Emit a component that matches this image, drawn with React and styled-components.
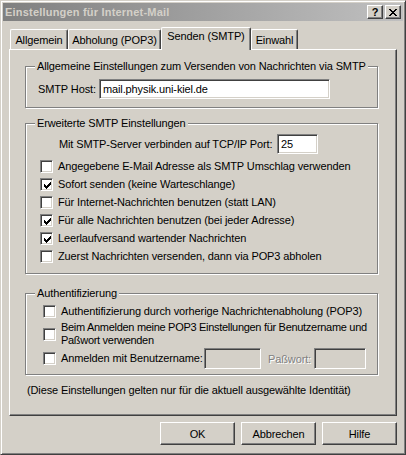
import React from 'react'
import styled, { createGlobalStyle } from 'styled-components'

const GlobalStyle = createGlobalStyle`
  body {
    margin: 0;
    background: #d4d0c8;
    font-family: "Liberation Sans", Arial, sans-serif;
    font-size: 11px;
    letter-spacing: -0.12px;
    color: #000;
  }
`;

const Window = styled.div`
  box-sizing: border-box;
  width: 406px;
  height: 455px;
  padding: 2px;
  background: #d4d0c8;
  border: 1px solid;
  border-color: #d4d0c8 #404040 #404040 #d4d0c8;
  box-shadow: inset 1px 1px #fff, inset -1px -1px #808080;
  display: flex;
  flex-direction: column;
`;

const TitleBar = styled.div`
  height: 18px;
  display: flex;
  align-items: center;
  justify-content: space-between;
  padding-left: 2px;
  background: linear-gradient(to right, #808080, #c0c0c0);
`;

const Title = styled.span`
  font-weight: bold;
  font-size: 11px;
  color: #d4d0c8;
  letter-spacing: 0.2px;
`;

const CaptionButtons = styled.div`
  display: flex;
  gap: 2px;
  margin-right: 2px;
`;

const CaptionButton = styled.div`
  box-sizing: border-box;
  width: 16px;
  height: 14px;
  background: #d4d0c8;
  border: 1px solid;
  border-color: #fff #404040 #404040 #fff;
  box-shadow: inset -1px -1px #808080;
  display: flex;
  align-items: center;
  justify-content: center;
  font-weight: bold;
  font-size: 11px;
  line-height: 1;
`;

const Body = styled.div`
  flex: 1;
  display: flex;
  flex-direction: column;
  padding: 6px 6px 0 6px;
`;

const TabStrip = styled.div`
  display: flex;
  align-items: flex-end;
  height: 22px;
  padding-left: 1px;
`;

const Tab = styled.div`
  box-sizing: border-box;
  position: relative;
  width: ${p => p.$w}px;
  height: ${p => (p.$active ? 23 : 20)}px;
  margin-bottom: ${p => (p.$active ? -1 : 0)}px;
  z-index: ${p => (p.$active ? 2 : 1)};
  background: #d4d0c8;
  border-top: 1px solid #fff;
  border-left: 1px solid #fff;
  border-right: 1px solid #404040;
  border-radius: 2px 2px 0 0;
  box-shadow: inset -1px 0 #808080;
  display: flex;
  justify-content: center;
  padding-top: ${p => (p.$active ? 2 : 4)}px;
  white-space: nowrap;
`;

const Panel = styled.div`
  box-sizing: border-box;
  width: 388px;
  height: 367px;
  padding: 16px 0 0 15px;
  background: #d4d0c8;
  border: 1px solid;
  border-color: #fff #404040 #404040 #fff;
  box-shadow: inset -1px -1px #808080;
  display: flex;
  flex-direction: column;
`;

const Group = styled.div`
  box-sizing: border-box;
  position: relative;
  width: 353px;
  margin-top: ${p => p.$mt || 0}px;
  padding: ${p => p.$pt}px 0 ${p => p.$pb}px ${p => p.$pl}px;
  border: 1px solid #808080;
  box-shadow: inset 1px 1px #fff, 1px 1px #fff;
  display: flex;
  flex-direction: column;
`;

const Legend = styled.span`
  position: absolute;
  top: -7px;
  left: 9px;
  padding: 0 2px;
  line-height: 13px;
  background: #d4d0c8;
  white-space: nowrap;
`;

const Row = styled.div`
  display: flex;
  align-items: center;
  margin-left: ${p => p.$ml || 0}px;
  margin-top: ${p => p.$mt || 0}px;
  min-height: ${p => p.$h ?? 18}px;
`;

const Label = styled.span`
  flex: none;
  width: ${p => (p.$w ? `${p.$w}px` : 'auto')};
  margin-left: ${p => p.$ml || 0}px;
  white-space: nowrap;
  color: ${p => (p.$disabled ? '#808080' : '#000')};
  text-shadow: ${p => (p.$disabled ? '1px 1px #fff' : 'none')};
`;

const TextBox = styled.div`
  box-sizing: border-box;
  flex: none;
  width: ${p => p.$w}px;
  height: ${p => p.$h || 20}px;
  padding: 2px 0 0 3px;
  background: ${p => (p.$disabled ? '#d4d0c8' : '#fff')};
  border: 1px solid;
  border-color: #808080 #fff #fff #808080;
  box-shadow: inset 1px 1px #404040, inset -1px -1px #d4d0c8;
  line-height: 14px;
  white-space: nowrap;
`;

const Box = styled.div`
  box-sizing: border-box;
  flex: none;
  width: 13px;
  height: 13px;
  padding: 2px;
  margin-right: 5px;
  background: #fff;
  border: 1px solid;
  border-color: #808080 #fff #fff #808080;
  box-shadow: inset 1px 1px #404040, inset -1px -1px #d4d0c8;
  svg { display: block; margin: 1px 0 0 1px; }
`;

const CheckText = styled.span`
  flex: none;
  line-height: 13px;
  width: ${p => (p.$w ? `${p.$w}px` : 'auto')};
  letter-spacing: ${p => (p.$tight ? '-0.3px' : 'inherit')};
  white-space: nowrap;
`;

const Footer = styled.div`
  margin: 9px 0 0 2px;
  line-height: 13px;
  white-space: nowrap;
`;

const ButtonRow = styled.div`
  display: flex;
  justify-content: flex-end;
  gap: 6px;
  width: 388px;
  margin-top: 6px;
`;

const Button = styled.div`
  box-sizing: border-box;
  width: 75px;
  height: 23px;
  background: #d4d0c8;
  border: 1px solid;
  border-color: #fff #404040 #404040 #fff;
  box-shadow: inset -1px -1px #808080;
  display: flex;
  align-items: center;
  justify-content: center;
`;

const CHECK = ['......x', '.....xx', 'x...xxx', 'xx.xxx.', 'xxxxx..', '.xxx...', '..x....'];

const CheckMark = () => (
  <svg width="7" height="7" viewBox="0 0 7 7" shapeRendering="crispEdges">
    {CHECK.flatMap((line, y) =>
      line.split('').map((c, x) => (c === 'x' ? <rect key={`${x}-${y}`} x={x} y={y} width="1" height="1" fill="#000" /> : null))
    )}
  </svg>
);

const CheckBox = ({ checked, children, mt }) => (
  <Row $mt={mt}>
    <Box>{checked && <CheckMark />}</Box>
    <CheckText>{children}</CheckText>
  </Row>
);

const smtpOptions = [
  { label: 'Angegebene E-Mail Adresse als SMTP Umschlag verwenden', checked: false },
  { label: 'Sofort senden (keine Warteschlange)', checked: true },
  { label: 'Für Internet-Nachrichten benutzen (statt LAN)', checked: false },
  { label: 'Für alle Nachrichten benutzen (bei jeder Adresse)', checked: true },
  { label: 'Leerlaufversand wartender Nachrichten', checked: true },
  { label: 'Zuerst Nachrichten versenden, dann via POP3 abholen', checked: false },
];

const tabs = [
  { label: 'Allgemein', w: 58 },
  { label: 'Abholung (POP3)', w: 93 },
  { label: 'Senden (SMTP)', w: 90, active: true },
  { label: 'Einwahl', w: 47 },
];

const App = () => {
  return (
    <>
      <GlobalStyle />
      <Window>
        <TitleBar>
          <Title>Einstellungen für Internet-Mail</Title>
          <CaptionButtons>
            <CaptionButton>?</CaptionButton>
            <CaptionButton>
              <svg width="8" height="7" viewBox="0 0 8 7" shapeRendering="crispEdges">
                <path d="M0 0h2v1h-2zM6 0h2v1h-2zM1 1h2v1h-2zM5 1h2v1h-2zM2 2h4v1h-4zM3 3h2v1h-2zM2 4h4v1h-4zM1 5h2v1h-2zM5 5h2v1h-2zM0 6h2v1h-2zM6 6h2v1h-2z" fill="#000" />
              </svg>
            </CaptionButton>
          </CaptionButtons>
        </TitleBar>
        <Body>
          <TabStrip>
            {tabs.map(t => (
              <Tab key={t.label} $w={t.w} $active={t.active}>{t.label}</Tab>
            ))}
          </TabStrip>
          <Panel>
            <Group $pt={12} $pb={8} $pl={12}>
              <Legend>Allgemeine Einstellungen zum Versenden von Nachrichten via SMTP</Legend>
              <Row $h={20}>
                <Label $w={61}>SMTP Host:</Label>
                <TextBox $w={231}>mail.physik.uni-kiel.de</TextBox>
              </Row>
            </Group>

            <Group $mt={15} $pt={10} $pb={8} $pl={14}>
              <Legend>Erweiterte SMTP Einstellungen</Legend>
              <Row $h={20} $ml={19}>
                <Label $w={218}>Mit SMTP-Server verbinden auf TCP/IP Port:</Label>
                <TextBox $w={41}>25</TextBox>
              </Row>
              {smtpOptions.map((o, i) => (
                <CheckBox key={o.label} checked={o.checked} mt={i === 0 ? 3 : 0}>{o.label}</CheckBox>
              ))}
            </Group>

            <Group $mt={19} $pt={8} $pb={5} $pl={17}>
              <Legend>Authentifizierung</Legend>
              <CheckBox>Authentifizierung durch vorherige Nachrichtenabholung (POP3)</CheckBox>
              <Row $mt={1} $h={26}>
                <Box />
                <CheckText $tight>Beim Anmelden meine POP3 Einstellungen für Benutzername und<br />Paßwort verwenden</CheckText>
              </Row>
              <Row $mt={1} $h={21}>
                <Box />
                <CheckText $w={143}>Anmelden mit Benutzername:</CheckText>
                <TextBox $w={57} $h={21} $disabled />
                <Label $disabled $ml={7} $w={46}>Paßwort:</Label>
                <TextBox $w={52} $h={21} $disabled />
              </Row>
            </Group>

            <Footer>(Diese Einstellungen gelten nur für die aktuell ausgewählte Identität)</Footer>
          </Panel>
          <ButtonRow>
            <Button>OK</Button>
            <Button>Abbrechen</Button>
            <Button>Hilfe</Button>
          </ButtonRow>
        </Body>
      </Window>
    </>
  )
}

export default App
